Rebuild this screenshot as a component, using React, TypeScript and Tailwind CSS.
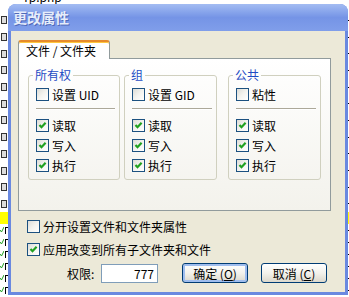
import React from 'react';

function Check({ on }: { on?: boolean }) {
  return (
    <span className="flex h-[13px] w-[13px] shrink-0 items-center justify-center border border-[#1c5180] bg-linear-to-br from-[#dcdcd7] via-[#f3f3ef] to-white">
      {on && (
        <svg width="9" height="9" viewBox="0 0 9 9">
          <path d="M1.5 4 L3.5 6.2 L7.6 1.8" stroke="#21a121" strokeWidth="2.2" fill="none" />
        </svg>
      )}
    </span>
  );
}

function Row({ on, label }: { on?: boolean; label: string }) {
  return (
    <div className="flex h-[13px] items-center gap-[3px]">
      <Check on={on} />
      <span className="whitespace-nowrap text-[12px] leading-[13px] text-black">{label}</span>
    </div>
  );
}

function Group({ title, first, className }: { title: string; first: string; className: string }) {
  return (
    <fieldset className={`h-[113px] shrink-0 rounded-[3px] border border-[#d0d0bf] px-0 ${className}`}>
      <legend className="ml-[4px] px-[2px] text-[12px] leading-[16px] text-[#1d4bc4]">{title}</legend>
      <div className="mt-[5px] flex flex-col pl-[7px] pr-[4px]">
        <Row label={first} />
        <div className="mt-[7px] h-[2px] border-t border-b border-t-[#aca899] border-b-white" />
        <div className="mt-[9px] flex flex-col gap-[7px]">
          <Row on label="读取" />
          <Row on label="写入" />
          <Row on label="执行" />
        </div>
      </div>
    </fieldset>
  );
}

function Backdrop() {
  const top = Array.from({ length: 12 });
  const low = Array.from({ length: 6 });
  return (
    <div className="flex h-full flex-col">
      <div className="relative h-[12px] overflow-hidden">
        <span className="absolute left-[20px] top-[-9px] text-[12px] leading-[12px]">-rp.php</span>
      </div>
      {top.map((_, i) => (
        <div key={i} className="flex h-[16.7px] items-center justify-between">
          <span className="ml-[1px] h-[8px] w-[6px] border border-[#333] bg-[#ddd]" />
          <span className="h-[1px] w-[3px] bg-black" />
        </div>
      ))}
      <div className="flex h-[12px] justify-between bg-[#ffff00]" />
      {low.map((_, i) => (
        <div key={i} className="flex h-[12px] items-center justify-between">
          <span className="flex items-center">
            <svg width="4" height="6" viewBox="0 0 4 6">
              <path d="M0 3 L1.5 5 L4 0" stroke="#21a121" strokeWidth="1" fill="none" />
            </svg>
            <span className="ml-[1px] h-[7px] w-[3px] border-l border-t border-black" />
          </span>
          <span className="h-[1px] w-[3px] bg-black" />
        </div>
      ))}
    </div>
  );
}

export default function App() {
  return (
    <div className="relative h-[297px] w-[349px] overflow-hidden bg-white font-['Noto_Sans_CJK_SC',sans-serif]">
      <Backdrop />

      {/* dialog window */}
      <div className="absolute left-[8px] top-[4px] flex h-[291px] w-[340px] flex-col overflow-hidden rounded-t-[8px] bg-[#6a89e0]">
        <div className="flex h-[27px] shrink-0 items-center bg-linear-to-b from-[#a3bcf2] via-[#7594e6] to-[#809eea] pl-[5px]">
          <span className="text-[14px] font-bold leading-[15px] text-[#e6edfb] [text-shadow:1px_1px_0_#4f68b8]">更改属性</span>
        </div>

        <div className="mx-[3px] mb-[3px] flex flex-1 flex-col bg-[#ece9d8] pl-[7px] pt-[9px]">
          {/* tab */}
          <div className="relative z-10 -mb-px flex h-[19px] w-[92px] items-center rounded-t-[3px] border-x border-t-2 border-x-[#919b9c] border-t-[#e68b2c] bg-white pl-[7px] shadow-[inset_0_1px_0_#ffc73c]">
            <span className="whitespace-nowrap text-[12px] leading-[13px] text-black">文件 / 文件夹</span>
          </div>
          <div className="flex h-[153px] w-[313px] border border-[#919b9c] bg-linear-to-b from-white to-[#f3f2ec] pl-[9px] pt-[8px]">
            <Group title="所有权" first="设置 UID" className="w-[92px]" />
            <Group title="组" first="设置 GID" className="ml-[4px] w-[93px]" />
            <Group title="公共" first="粘性" className="ml-[11px] w-[93px]" />
          </div>

          <div className="ml-[9px] mt-[9px] flex flex-col gap-[10px]">
            <Row label="分开设置文件和文件夹属性" />
            <Row on label="应用改变到所有子文件夹和文件" />
          </div>

          <div className="mt-[7px] flex items-center">
            <span className="ml-[49px] w-[34px] text-[12px] leading-[13px]">权限:</span>
            <div className="flex h-[19px] w-[57px] items-center justify-end border border-[#7f9db9] bg-white pr-[3px] text-[12px] leading-[13px]">
              777
            </div>
            <button className="ml-[24px] flex h-[20px] w-[66px] items-center justify-center rounded-[3px] border border-[#003c74] bg-linear-to-b from-white via-[#f3f2ec] to-[#dcd8cc] text-[12px] leading-[13px] shadow-[inset_0_0_0_2px_#9fbdee]">
              确定 (<u>O</u>)
            </button>
            <button className="ml-[13px] flex h-[20px] w-[66px] items-center justify-center rounded-[3px] border border-[#003c74] bg-linear-to-b from-white via-[#f3f2ec] to-[#dcd8cc] text-[12px] leading-[13px]">
              取消 (<u>C</u>)
            </button>
          </div>
        </div>
      </div>
    </div>
  );
}
